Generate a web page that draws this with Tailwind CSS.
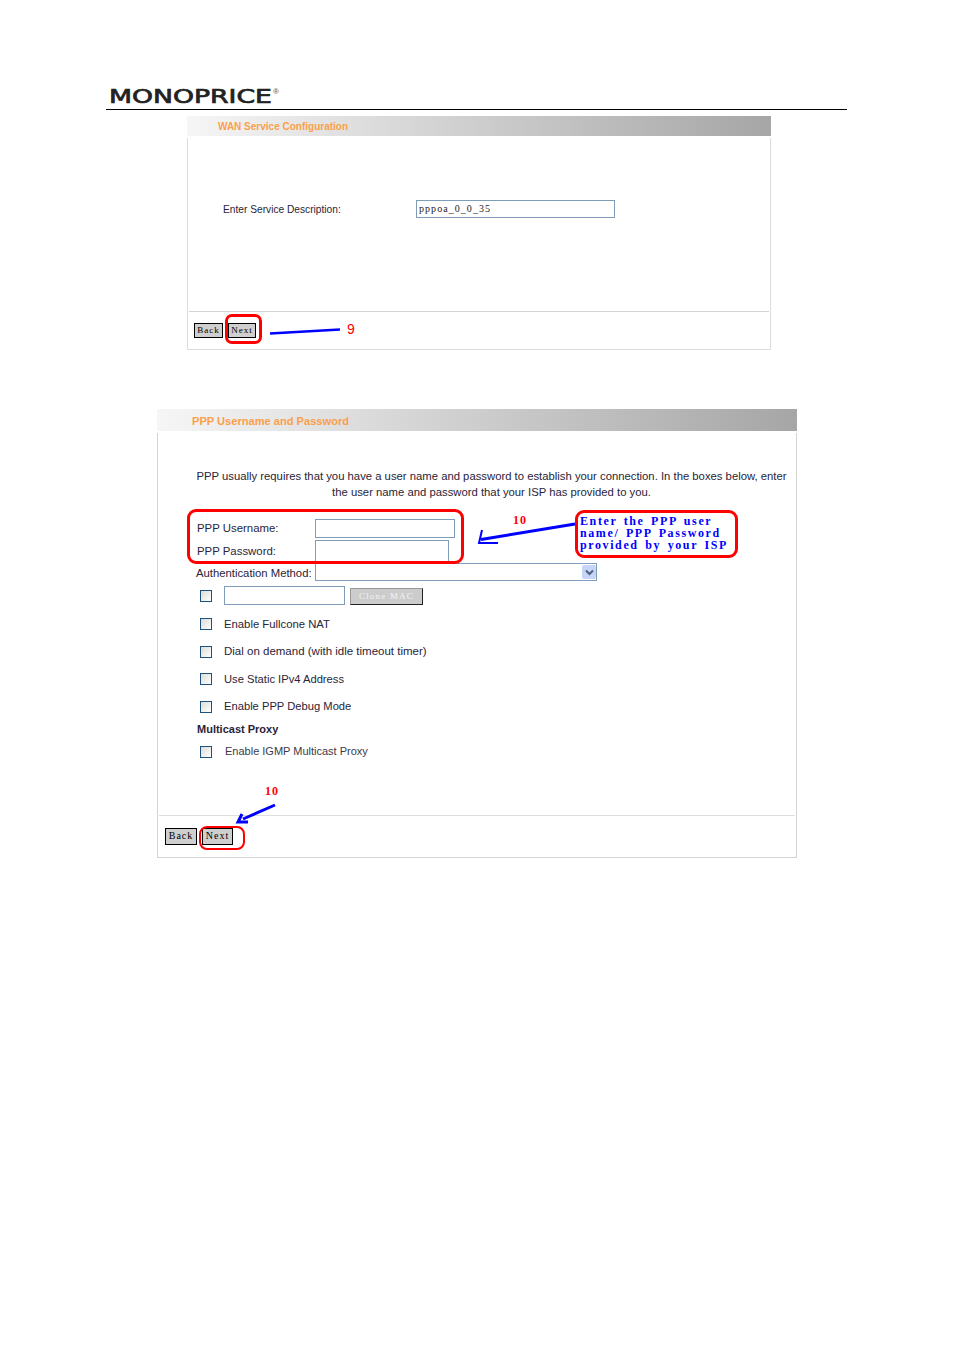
<!DOCTYPE html>
<html><head><meta charset="utf-8"><script src="https://cdn.jsdelivr.net/npm/@tailwindcss/browser@4"></script></head>
<body class="bg-white">
<div class="relative w-[953px] h-[1349px] overflow-hidden font-['Liberation_Sans',sans-serif] text-[#2a2438] text-[11.3px]">
  <header class="pt-[84px] ml-[106px] w-[741px] h-[110px] border-b border-black">
    <svg class="ml-[3px] block" width="172" height="24" viewBox="0 0 172 24"><text x="0" y="19" textLength="163" lengthAdjust="spacingAndGlyphs" font-family="DejaVu Sans" font-weight="400" font-size="19" fill="#222" stroke="#222" stroke-width="0.7">MONOPRICE</text><text x="164" y="10" font-family="Liberation Sans" font-size="8" font-weight="700" fill="#777">®</text></svg>
  </header>

  <section class="ml-[187px] w-[584px] mt-[6px] h-[234px]">
    <div class="h-[20px] pl-[31px] leading-[21px] bg-gradient-to-r from-[#f6f6f6] to-[#a6a6a6] text-[#fb9f4a] font-bold text-[10px]">WAN Service Configuration</div>
    <div class="mt-[2px] h-[212px] border-l border-r border-b border-[#dcdcdc] flex flex-col">
      <div class="h-[173px] flex items-center pl-[35px] pb-[31px]">
        <span class="w-[193px] text-[10.2px] pt-[1px]">Enter Service Description:</span>
        <div class="w-[199px] h-[18px] border border-[#7f9db9] pl-[2px] font-['Liberation_Serif',serif] tracking-[1.05px] text-[10px] leading-[15px] text-[#222]">pppoa_0_0_35</div>
      </div>
      <div class="mx-[1px] border-t border-[#d4d4d4] flex gap-[5px] pl-[5px] pt-[11px]">
        <div class="w-[29px] h-[15px] bg-[#cfcfcf] border border-black text-center font-['Liberation_Serif',serif] tracking-[1px] text-[9px] leading-[12px] text-black">Back</div>
        <div class="w-[28px] h-[15px] bg-[#cfcfcf] border border-black text-center font-['Liberation_Serif',serif] tracking-[1px] text-[9px] leading-[12px] text-black">Next</div>
      </div>
    </div>
  </section>

  <section class="ml-[157px] w-[640px] mt-[59px]">
    <div class="h-[22px] pl-[35px] leading-[24px] bg-gradient-to-r from-[#f6f6f6] to-[#a6a6a6] text-[#fb9f4a] font-bold text-[11.1px]">PPP Username and Password</div>
    <div class="mt-[2px] h-[425px] border-l border-r border-b border-[#d4d4d4] flex flex-col">
      <p class="pt-[35px] pl-[38px] pr-[9px] text-center leading-[16px] text-[11.3px] whitespace-nowrap h-[85px]">PPP usually requires that you have a user name and password to establish your connection. In the boxes below, enter<br>the user name and password that your ISP has provided to you.</p>
      <div class="flex h-[21px] items-center pl-[39px]"><span class="w-[118px] text-[11.4px]">PPP Username:</span><div class="w-[140px] h-[19px] border border-[#7f9db9]"></div></div>
      <div class="flex h-[24px] items-end pl-[39px]"><span class="w-[118px] pb-[3px] text-[11.4px]">PPP Password:</span><div class="w-[134px] h-[23px] border border-[#7f9db9] border-b-0"></div></div>
      <div class="flex h-[18px] items-center pl-[38px]"><span class="w-[119px] whitespace-nowrap pt-[2px] text-[11.3px]">Authentication Method:</span>
        <div class="w-[282px] h-[18px] border border-[#7f9db9] flex justify-end items-center"><div class="w-[14px] h-[14px] rounded-[2px] bg-[#c6d4f5] flex items-center justify-center"><svg width="9" height="7" viewBox="0 0 9 7"><path d="M1 1.5l3.5 3.5L8 1.5" fill="none" stroke="#4d6185" stroke-width="2"/></svg></div></div></div>
      <div class="flex h-[24px] mt-[2px] items-center pl-[42px]">
        <div class="w-[12px] h-[12px] mt-[2px] border border-[#1c5180] bg-gradient-to-br from-[#dcdcd7] to-white"></div>
        <div class="ml-[12px] w-[121px] h-[19px] border border-[#7f9db9]"></div>
        <div class="ml-[5px] mt-[3px] w-[73px] h-[17px] bg-[#cccccc] border-t border-l border-[#999] border-r border-b border-r-[#222] border-b-[#222] text-center font-['Liberation_Serif',serif] tracking-[1.2px] text-[9px] leading-[15px] text-[#f2f2f2]">Clone MAC</div>
      </div>
      <div class="flex h-[27.5px] mt-[3.5px] items-center pl-[42px] gap-[12px]"><div class="w-[12px] h-[12px] border border-[#1c5180] bg-gradient-to-br from-[#dcdcd7] to-white"></div><span>Enable Fullcone NAT</span></div>
      <div class="flex h-[27.5px] items-center pl-[42px] gap-[12px]"><div class="w-[12px] h-[12px] border border-[#1c5180] bg-gradient-to-br from-[#dcdcd7] to-white"></div><span class="text-[11.5px]">Dial on demand (with idle timeout timer)</span></div>
      <div class="flex h-[27.5px] items-center pl-[42px] gap-[12px]"><div class="w-[12px] h-[12px] border border-[#1c5180] bg-gradient-to-br from-[#dcdcd7] to-white"></div><span class="text-[11.2px]">Use Static IPv4 Address</span></div>
      <div class="flex h-[27.5px] items-center pl-[42px] gap-[12px]"><div class="w-[12px] h-[12px] border border-[#1c5180] bg-gradient-to-br from-[#dcdcd7] to-white"></div><span class="text-[11.2px]">Enable PPP Debug Mode</span></div>
      <div class="h-[17.5px] pl-[39px] font-bold leading-[17px] text-[11px]">Multicast Proxy</div>
      <div class="flex h-[27px] items-center pl-[42px] gap-[13px]"><div class="w-[12px] h-[12px] border border-[#1c5180] bg-gradient-to-br from-[#dcdcd7] to-white"></div><span class="text-[#3a3a4a] text-[11px]">Enable IGMP Multicast Proxy</span></div>
      <div class="mt-[50px] mx-[1px] border-t border-[#dedede] flex gap-[5px] pl-[6px] pt-[12px]">
        <div class="w-[32px] h-[17px] bg-[#cfcfcf] border border-black text-center font-['Liberation_Serif',serif] tracking-[1px] text-[10px] leading-[14px] text-black">Back</div>
        <div class="w-[31px] h-[17px] bg-[#cfcfcf] border border-black text-center font-['Liberation_Serif',serif] tracking-[1px] text-[10px] leading-[14px] text-black">Next</div>
      </div>
    </div>
  </section>

  <div class="absolute left-[225px] top-[314px] w-[37px] h-[30px] border-[3px] border-[#f00] rounded-[7px]"></div>
  <div class="absolute left-[187px] top-[509px] w-[277px] h-[55px] border-[3px] border-[#f00] rounded-[9px]"></div>
  <div class="absolute left-[575px] top-[510px] w-[163px] h-[48px] border-[3px] border-[#f00] rounded-[9px] pl-[2px] pt-[2px] font-['Liberation_Serif',serif] font-bold text-[#0000ff] text-[12px] leading-[12px] tracking-[1.6px] [word-spacing:2px] whitespace-nowrap">Enter the PPP user<br>name/ PPP Password<br>provided by your ISP</div>
  <div class="absolute left-[199px] top-[826px] w-[46px] h-[24px] border-[2px] border-[#f00] rounded-[8px]"></div>
  <span class="absolute left-[347px] top-[321px] text-[#f00] text-[14px] leading-[16px]">9</span>
  <span class="absolute left-[513px] top-[514px] text-[#f00] font-['Liberation_Serif',serif] font-bold text-[12px] leading-[13px] tracking-[1px]">10</span>
  <span class="absolute left-[265px] top-[785px] text-[#f00] font-['Liberation_Serif',serif] font-bold text-[12px] leading-[13px] tracking-[1px]">10</span>
  <svg class="absolute left-0 top-0" width="953" height="1349" viewBox="0 0 953 1349" fill="none" stroke="#0000ff">
    <path d="M270 333.5L340 329.5" stroke-width="2.5"/>
    <path d="M575 524L481 539.5" stroke-width="3"/>
    <path d="M482 530L479 543L498 543" stroke-width="2"/>
    <path d="M275 805L243 819" stroke-width="3"/>
    <path d="M242 814L238 822L248 822" stroke-width="3"/>
  </svg>
</div>
</body></html>
